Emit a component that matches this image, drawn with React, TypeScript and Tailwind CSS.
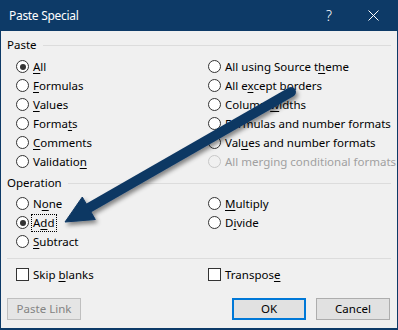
import React from "react";

const font = "font-['Noto_Sans',sans-serif]";

// underline one character (the access key)
const Accel = ({ text, at }: { text: string; at: number }) => {
  if (at < 0) return <>{text}</>;
  return (
    <>
      {text.slice(0, at)}
      <span className="underline underline-offset-[2px] decoration-1">{text[at]}</span>
      {text.slice(at + 1)}
    </>
  );
};

interface RadioProps {
  text: string;
  at: number;
  checked?: boolean;
  disabled?: boolean;
  focused?: boolean;
}

const Radio = ({ text, at, checked, disabled, focused }: RadioProps) => (
  <div className="flex items-center h-[19px]">
    <span
      className={`w-[13px] h-[13px] rounded-full border flex items-center justify-center shrink-0 ${
        disabled ? "border-[#c8c8c8] bg-[#f0f0f0]" : "border-[#333333] bg-white"
      }`}
    >
      {checked && <span className="w-[6px] h-[6px] rounded-full bg-[#333333]" />}
    </span>
    <span
      className={`ml-[3px] px-[1px] leading-[16px] whitespace-nowrap ${
        disabled ? "text-[#a0a0a0]" : "text-black"
      } ${focused ? "outline outline-1 outline-dotted outline-black" : ""}`}
    >
      <Accel text={text} at={at} />
    </span>
  </div>
);

const Check = ({ text, at }: { text: string; at: number }) => (
  <div className="flex items-center h-[19px]">
    <span className="w-[13px] h-[13px] border border-[#333333] bg-white shrink-0" />
    <span className="ml-[4px] leading-[16px] whitespace-nowrap">
      <Accel text={text} at={at} />
    </span>
  </div>
);

const GroupHeader = ({ label }: { label: string }) => (
  <div className="flex items-center h-[16px]">
    <span className="leading-[16px]">{label}</span>
    <span className="flex-1 h-px bg-[#dcdcdc] ml-[6px]" />
  </div>
);

export default function App() {
  return (
    <div className={`relative w-[398px] h-[330px] bg-[#0d3a67] flex flex-col ${font} text-[11.5px] text-black overflow-hidden`}>
      {/* title bar */}
      <div className="h-[31px] flex items-center text-white shrink-0">
        <span className="ml-[9px] text-[12px] tracking-[-0.3px]">Paste Special</span>
        <span className="ml-auto text-[14px] font-light mr-[36px]">?</span>
        <svg width="11" height="11" viewBox="0 0 11 11" className="mr-[19px]">
          <path d="M0.5 0.5 L10.5 10.5 M10.5 0.5 L0.5 10.5" stroke="white" strokeWidth="1" />
        </svg>
      </div>

      {/* body */}
      <div className="flex-1 mx-[1px] mb-[2px] bg-[#f0f0f0] pl-[6px] pr-[6px] pt-[6px] flex flex-col">
        <GroupHeader label="Paste" />
        <div className="grid grid-cols-[192px_1fr] pl-[9px] mt-[4px]">
          <div className="flex flex-col">
            <Radio text="All" at={0} checked />
            <Radio text="Formulas" at={0} />
            <Radio text="Values" at={0} />
            <Radio text="Formats" at={5} />
            <Radio text="Comments" at={0} />
            <Radio text="Validation" at={9} />
          </div>
          <div className="flex flex-col">
            <Radio text="All using Source theme" at={18} />
            <Radio text="All except borders" at={5} />
            <Radio text="Column widths" at={7} />
            <Radio text="Formulas and number formats" at={-1} />
            <Radio text="Values and number formats" at={3} />
            <Radio text="All merging conditional formats" at={-1} disabled />
          </div>
        </div>

        <div className="mt-[4px]">
          <GroupHeader label="Operation" />
        </div>
        <div className="grid grid-cols-[192px_1fr] pl-[9px] mt-[3px]">
          <div className="flex flex-col">
            <Radio text="None" at={1} />
            <Radio text="Add" at={1} checked focused />
            <Radio text="Subtract" at={0} />
          </div>
          <div className="flex flex-col">
            <Radio text="Multiply" at={0} />
            <Radio text="Divide" at={1} />
          </div>
        </div>

        <div className="h-px bg-[#dcdcdc] mt-[7px]" />

        <div className="grid grid-cols-[192px_1fr] pl-[9px] mt-[6px]">
          <Check text="Skip blanks" at={5} />
          <Check text="Transpose" at={8} />
        </div>

        <div className="flex items-center mt-[14px] pr-[1px]">
          <button className="w-[74px] h-[22px] border border-[#bfbfbf] bg-[#e5e5e5] text-[#838383]">
            Paste Link
          </button>
          <button className="ml-auto w-[74px] h-[22px] border-2 border-[#0078d7] bg-[#e1e1e1]">
            OK
          </button>
          <button className="ml-[10px] w-[74px] h-[22px] border border-[#adadad] bg-[#e1e1e1]">
            Cancel
          </button>
        </div>
      </div>

      {/* annotation arrow drawn over the dialog */}
      <svg
        className="absolute left-0 top-0 pointer-events-none"
        width="398"
        height="330"
        viewBox="0 0 398 330"
      >
        <defs>
          <filter id="sh" x="-20%" y="-20%" width="140%" height="140%">
            <feDropShadow dx="2" dy="3" stdDeviation="2" floodColor="#000" floodOpacity="0.45" />
          </filter>
        </defs>
        <g filter="url(#sh)" fill="#0c3763" stroke="#0c3763">
          <line x1="86" y1="209.5" x2="291" y2="92" strokeWidth="10" strokeLinecap="round" />
          <polygon points="65,222 82.3,197 95.3,219.5" strokeWidth="1" strokeLinejoin="round" />
        </g>
      </svg>
    </div>
  );
}
